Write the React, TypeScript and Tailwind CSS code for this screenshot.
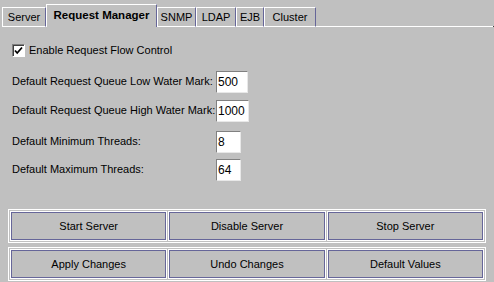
import React from "react";

const TABS = [
  { label: "Server", w: "w-[44px]" },
  { label: "Request Manager", w: "w-[111px]", selected: true },
  { label: "SNMP", w: "w-[39px]" },
  { label: "LDAP", w: "w-[40px]" },
  { label: "EJB", w: "w-[28px]" },
  { label: "Cluster", w: "w-[52px]" },
];

const FIELDS = [
  { label: "Default Request Queue Low Water Mark:", value: "500", w: "w-[32px]", mt: "mt-[12px]" },
  { label: "Default Request Queue High Water Mark:", value: "1000", w: "w-[33px]", mt: "mt-[7px]" },
  { label: "Default Minimum Threads:", value: "8", w: "w-[25px]", mt: "mt-[9px]" },
  { label: "Default Maximum Threads:", value: "64", w: "w-[25px]", mt: "mt-[6px]" },
];

const ROWS = [
  ["Start Server", "Disable Server", "Stop Server"],
  ["Apply Changes", "Undo Changes", "Default Values"],
];

function Checkbox() {
  return (
    <span className="flex h-[13px] w-[13px] items-center justify-center border border-t-[#808080] border-l-[#808080] border-b-white border-r-white bg-white shadow-[inset_1px_1px_0_#404040]">
      <svg width="9" height="9" viewBox="0 0 9 9">
        <path d="M1 4.5 L3.2 7 L8 1.5" fill="none" stroke="#000" strokeWidth="1.8" />
      </svg>
    </span>
  );
}

export default function App() {
  return (
    <div className="flex h-[282px] w-[494px] flex-col overflow-hidden whitespace-nowrap bg-[#c0c0c0] font-['Liberation_Sans',Arial,sans-serif] text-[11px] text-black">
      {/* tab strip */}
      <div className="flex h-[27px] items-end pl-[2px]">
        {TABS.map((t) =>
          t.selected ? (
            <div
              key={t.label}
              className={`${t.w} flex h-[23px] items-center justify-center border-l border-t border-r border-l-white border-t-white border-r-[#666699] pb-[1px] text-[11.5px] font-bold`}
            >
              {t.label}
            </div>
          ) : (
            <div
              key={t.label}
              className={`${t.w} flex h-[20px] items-center justify-center border-l border-t border-r border-b border-l-white border-t-white border-r-[#666699] border-b-white`}
            >
              {t.label}
            </div>
          )
        )}
        <div className="h-[1px] flex-1 bg-white" />
        <div className="h-[1px] w-[1px] bg-[#404040]" />
      </div>

      {/* body */}
      <div className="flex flex-1 flex-col px-[8px]">
        <label className="mt-[15px] flex items-center gap-[4px] pl-[4px]">
          <Checkbox />
          <span>Enable Request Flow Control</span>
        </label>

        {FIELDS.map((f) => (
          <div key={f.label} className={`${f.mt} flex items-center pl-[4px]`}>
            <span className="w-[204px]">{f.label}</span>
            <span
              className={`${f.w} flex h-[22px] items-center border border-t-[#808080] border-l-[#808080] border-b-[#e8e8e8] border-r-[#e8e8e8] bg-white pl-[1px] text-[12px]`}
            >
              {f.value}
            </span>
          </div>
        ))}

        <div className="mt-auto mb-[1px] flex flex-col gap-[4px]">
          {ROWS.map((row, i) => (
            <div key={i} className="grid h-[34px] grid-cols-3 gap-[3px] border border-white p-[2px]">
              {row.map((b) => (
                <button
                  key={b}
                  className="flex items-center justify-center border border-[#666699] bg-[#c0c0c0] shadow-[0_0_0_1px_#ffffff]"
                >
                  {b}
                </button>
              ))}
            </div>
          ))}
        </div>
      </div>
    </div>
  );
}
